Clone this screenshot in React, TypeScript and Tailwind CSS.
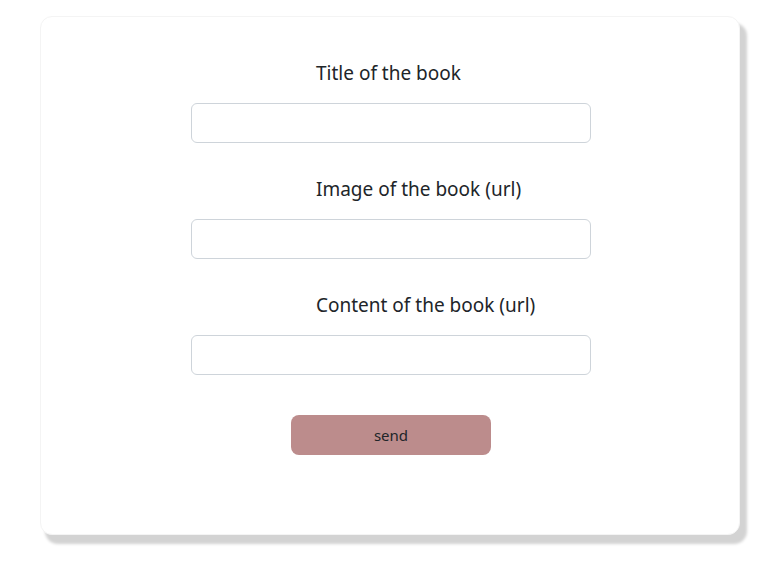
const FIELDS = ['Title of the book', 'Image of the book (url)', 'Content of the book (url)']

export default function App() {
  return (
    <div className="min-h-[563px] w-full bg-white pt-4 pl-10 font-['Noto_Sans',sans-serif] text-[#212529]">
      <div className="h-[519px] w-[700px] rounded-xl border border-[#f4f4f4] bg-white shadow-[6px_8px_3px_1px_#d3d3d3]">
        <form className="flex flex-col items-center pt-[41px] pl-[2px]" onSubmit={(e) => e.preventDefault()}>
          {FIELDS.map((label) => (
            <div key={label} className="mb-[31px] flex w-[400px] flex-col">
              <label className="mb-[15px] ml-[125px] text-[19px] leading-[30px]">{label}</label>
              <input
                type="text"
                className="h-[40px] w-full rounded-md border border-[#ced4da] bg-white px-3 outline-none"
              />
            </div>
          ))}
          <button
            type="submit"
            className="mt-[9px] h-[40px] w-[200px] rounded-lg bg-[#bc8c8c] text-[15px] text-[#212529]"
          >
            send
          </button>
        </form>
      </div>
    </div>
  )
}
